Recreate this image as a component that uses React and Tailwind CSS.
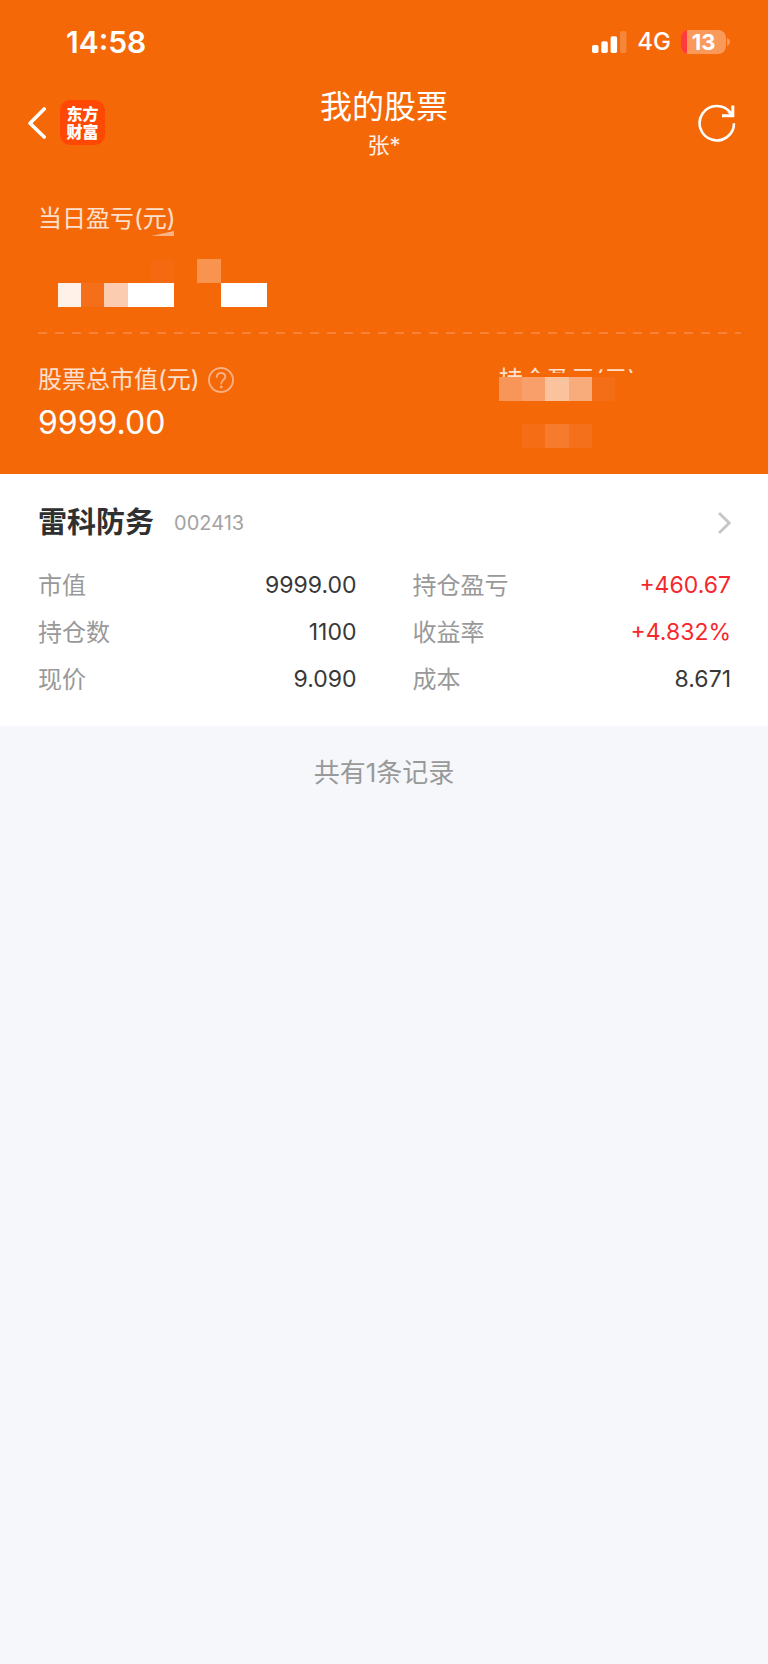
import React from 'react';

const summary = {
    owner: '张*',
    marketValue: '9999.00'
};

const stock = {
    name: '雷科防务',
    code: '002413',
    fields: [
        { label: '市值', value: '9999.00' },
        { label: '持仓盈亏', value: '+460.67', up: true },
        { label: '持仓数', value: '1100' },
        { label: '收益率', value: '+4.832%', up: true },
        { label: '现价', value: '9.090' },
        { label: '成本', value: '8.671' }
    ]
};

const N = 'bg-transparent';

// hidden amounts are shown as coarse blocks, one class per block
const todayBlocks = [
    N, N, N, N, 'bg-[#f56a10]', N, 'bg-[#f99350]', N, N,
    'bg-[#fff0e8]', 'bg-[#f56e1a]', 'bg-[#fbccb0]', 'bg-white', 'bg-white', N, N, 'bg-white', 'bg-white'
];

const profitBlocks = [
    'bg-[#f8965a]', 'bg-[#f99f69]', 'bg-[#fbc29e]', 'bg-[#f9ac7b]', 'bg-[#f46d17]',
    N, N, N, N, N,
    N, 'bg-[#f56e16]', 'bg-[#f77b2c]', 'bg-[#f5701a]', N
];

const SignalIcon = () => (
    <svg width="35" height="22" viewBox="0 0 35 22" fill="white" aria-hidden="true">
        <rect x="0" y="14" width="6.5" height="8" rx="1.8" />
        <rect x="9.3" y="10.3" width="6.5" height="11.7" rx="1.8" />
        <rect x="18.6" y="5.2" width="6.5" height="16.8" rx="1.8" />
        <rect x="28" y="0" width="6.5" height="22" rx="1.8" opacity="0.2" />
    </svg>
);

const Battery = ({ level }) => (
    <div className="flex items-center gap-px">
        <div className="flex h-6 w-[45px] items-center justify-center rounded-lg bg-[linear-gradient(to_right,#ff3b3f_6px,#f99a5b_6px)] text-[22px] leading-6 font-bold">
            {level}
        </div>
        <svg width="3" height="8" viewBox="0 0 3 8" aria-hidden="true">
            <path d="M0 0C2 .8 3 2.200 3 4S2 7.200 0 8z" fill="#f99a5b" />
        </svg>
    </div>
);

const StatusBar = () => (
    <div className="flex h-[84px] items-center justify-between pr-[38px] pl-[66px]">
        <span className="text-[30px] font-semibold">14:58</span>
        <div className="flex items-center gap-[10px]">
            <SignalIcon />
            <span className="text-2xl font-medium">4G</span>
            <Battery level={13} />
        </div>
    </div>
);

const Header = () => (
    <header className="grid h-[76px] grid-cols-[1fr_auto_1fr] items-center px-7">
        <div className="flex items-center gap-[14px]">
            <button type="button" aria-label="返回">
                <svg width="18" height="32" viewBox="0 0 18 32" fill="none" stroke="white" strokeWidth="3.600" strokeLinecap="round" strokeLinejoin="round">
                    <path d="M16.200 2L2 16.200L16.200 30" />
                </svg>
            </button>
            <div className="flex size-[45px] items-center justify-center rounded-[10px] bg-[#ff4803] text-center text-base leading-[18px] font-black">
                东方
                <br />
                财富
            </div>
        </div>
        <div className="text-center">
            <h1 className="pt-px text-[32px] leading-[44px]">我的股票</h1>
            <p className="text-[22px] leading-8 text-white/90">{summary.owner}</p>
        </div>
        <button type="button" aria-label="刷新" className="justify-self-end p-1">
            <svg width="38" height="38" viewBox="0 0 38 38" fill="none" stroke="white" strokeWidth="2.600">
                <path d="M36 19.200A17.200 17.200 0 1 1 32.500 8.800" />
                <path d="M34.800 1.500V11.800H24" strokeWidth="3" />
                <path d="M30.500 7L34 11" strokeWidth="3" />
            </svg>
        </button>
    </header>
);

const Summary = () => (
    <section className="pt-[43px] pr-[27px] pb-[26px] pl-[38px]">
        <div className="relative w-fit text-2xl leading-8 text-white/80">
            当日盈亏(元)
            <svg className="absolute right-[2px] -bottom-px" width="23" height="5" viewBox="0 0 23 5" aria-hidden="true">
                <path d="M23 0V5H0z" fill="#fbb287" />
            </svg>
        </div>
        <div className="mt-6 ml-5 grid h-12 w-[209px] grid-cols-9 grid-rows-2">
            {todayBlocks.map((tone, i) => (
                <span key={i} className={tone} />
            ))}
        </div>
        <div className="mt-[25px] h-[2px] bg-[repeating-linear-gradient(to_right,#f88037_0_9px,transparent_9px_17px)]" />
        <div className="mt-[30px] flex justify-between">
            <div>
                <div className="flex items-center gap-2 text-2xl leading-8 text-white/80">
                    股票总市值(元)
                    <button type="button" aria-label="说明">
                        <svg width="26" height="26" viewBox="0 0 26 26" fill="none" stroke="#fbae80" strokeWidth="1.900" strokeLinecap="round">
                            <circle cx="13" cy="13" r="12" />
                            <path d="M8.800 10C8.800 7.500 10.500 6 13 6s4.300 1.500 4.300 3.800c0 3-4.100 3.300-4.100 6.700" />
                            <circle cx="13.200" cy="20" r=".6" fill="#fbae80" />
                        </svg>
                    </button>
                </div>
                <div className="mt-[7px] text-[32px] leading-10">{summary.marketValue}</div>
            </div>
            <div className="w-[242px]">
                <div className="h-[13px] text-2xl leading-8 text-white/80">
                    <div className="[clip-path:polygon(0_0,100%_0,100%_9px,23px_9px,23px_13px,0_13px)]">持仓盈亏(元)</div>
                </div>
                <div className="grid h-[71px] w-[116px] grid-cols-5 grid-rows-3">
                    {profitBlocks.map((tone, i) => (
                        <span key={i} className={tone} />
                    ))}
                </div>
            </div>
        </div>
    </section>
);

const StockCard = ({ item }) => (
    <section className="bg-white pt-[30px] pr-[37px] pb-[23px] pl-[38px]">
        <a href="#detail" className="flex h-[38px] items-center">
            <h2 className="text-[29px] font-bold text-[#303030]">{item.name}</h2>
            <span className="ml-5 text-xl text-[#a3a3a3]">{item.code}</span>
            <svg className="ml-auto" width="13" height="22" viewBox="0 0 13 22" fill="none" stroke="#c6c6c6" strokeWidth="2.800">
                <path d="M1 1L11.200 11L1 21" />
            </svg>
        </a>
        <dl className="mt-5 grid grid-cols-2 gap-x-14 text-2xl leading-[47px]">
            {item.fields.map((field) => (
                <div key={field.label} className="flex justify-between">
                    <dt className="text-[#999999]">{field.label}</dt>
                    <dd className={field.up ? 'text-[23px] text-[#f5282d]' : 'text-[23px] text-[#383838]'}>{field.value}</dd>
                </div>
            ))}
        </dl>
    </section>
);

const App = () => (
    <div className="min-h-screen bg-[#f6f7fa] font-['Inter','Noto_Sans_CJK_SC',sans-serif]" lang="zh-CN">
        <div className="bg-[#f46808] text-white">
            <StatusBar />
            <Header />
            <Summary />
        </div>
        <main>
            <StockCard item={stock} />
            <p className="pt-7 text-center text-[26px] leading-[38px] text-[#999999]">共有1条记录</p>
        </main>
    </div>
);

export default App;
